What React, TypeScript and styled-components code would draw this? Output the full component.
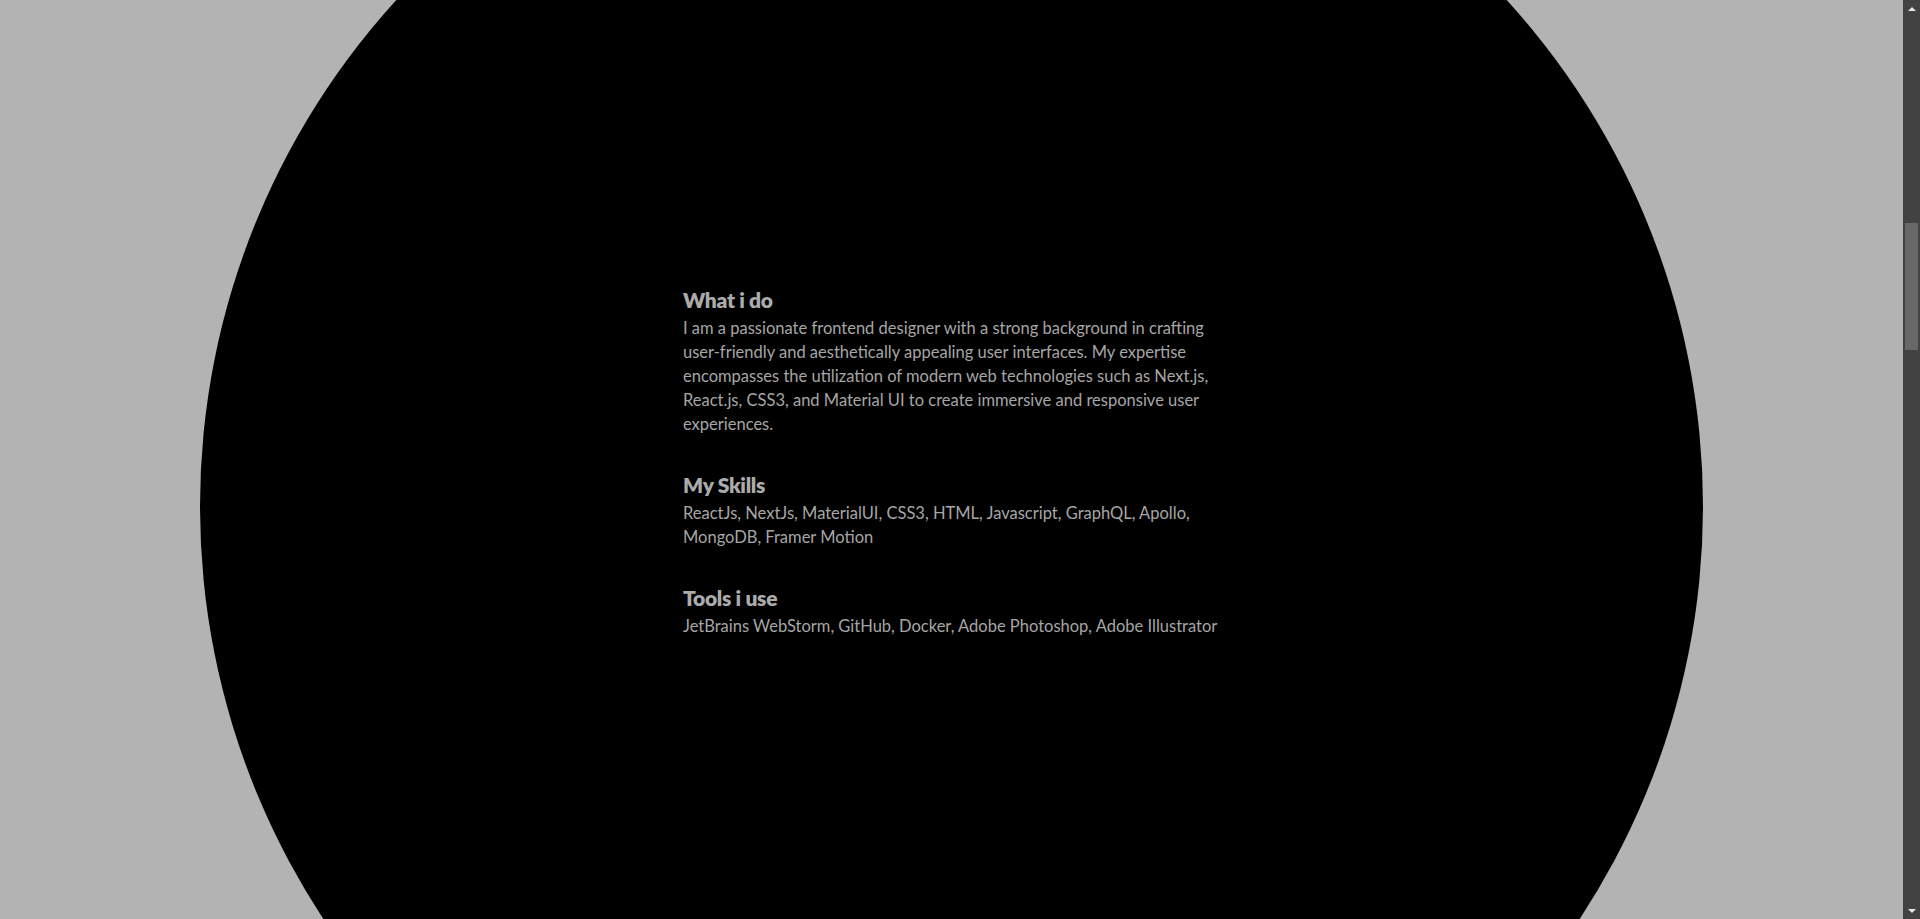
import React from 'react'
import styled, { createGlobalStyle } from 'styled-components'

const GlobalStyle = createGlobalStyle`
  body {
    margin: 0;
    overflow: hidden;
    background: #b3b3b3;
    font-family: Lato, "Noto Sans", sans-serif;
  }
`

const Page = styled.div`
  display: flex;
  height: 919px;
`

const Stage = styled.section`
  flex: 1;
  height: 919px;
  overflow: hidden;
  display: grid;
  grid-template-columns: 1fr;
  grid-template-rows: 919px;
  place-items: center;
`

const Circle = styled.div`
  grid-area: 1 / 1;
  width: 1503px;
  height: 1503px;
  margin-top: 93px;
  border-radius: 50%;
  background: #000;
`

const About = styled.div`
  grid-area: 1 / 1;
  width: 537px;
  padding-top: 5px;
  display: flex;
  flex-direction: column;
  gap: 35px;
`

const Block = styled.div`
  display: flex;
  flex-direction: column;
  gap: 2px;
`

const Heading = styled.h2`
  margin: 0;
  font-size: 21px;
  line-height: 28px;
  font-weight: 800;
  letter-spacing: -0.3px;
  color: #ababab;
`

const Text = styled.p`
  margin: 0;
  font-size: 16.5px;
  line-height: 24px;
  color: #a6a6a6;
`

const Scrollbar = styled.div`
  width: 17px;
  height: 919px;
  background: #424242;
  display: flex;
  flex-direction: column;
  align-items: center;
`

const Arrow = styled.div<{ $down?: boolean }>`
  height: 17px;
  display: flex;
  align-items: center;
  justify-content: center;
  &::after {
    content: '';
    border-left: 4px solid transparent;
    border-right: 4px solid transparent;
    ${(p) =>
      p.$down ? 'border-top: 4px solid #e6e6e6;' : 'border-bottom: 4px solid #e6e6e6;'}
  }
`

const Rail = styled.div`
  flex: 1;
  width: 100%;
  padding-top: 206px;
  box-sizing: border-box;
  display: flex;
  justify-content: center;
`

const Thumb = styled.div`
  width: 13px;
  height: 127px;
  background: #686868;
`

const sections = [
  {
    title: 'What i do',
    text: 'I am a passionate frontend designer with a strong background in crafting user-friendly and aesthetically appealing user interfaces. My expertise encompasses the utilization of modern web technologies such as Next.js, React.js, CSS3, and Material UI to create immersive and responsive user experiences.',
  },
  {
    title: 'My Skills',
    text: 'ReactJs, NextJs, MaterialUI, CSS3, HTML, Javascript, GraphQL, Apollo, MongoDB, Framer Motion',
  },
  {
    title: 'Tools i use',
    text: 'JetBrains WebStorm, GitHub, Docker, Adobe Photoshop, Adobe Illustrator',
  },
]

export default function App() {
  return (
    <>
      <GlobalStyle />
      <Page>
        <Stage>
          <Circle />
          <About>
            {sections.map((s) => (
              <Block key={s.title}>
                <Heading>{s.title}</Heading>
                <Text>{s.text}</Text>
              </Block>
            ))}
          </About>
        </Stage>
        <Scrollbar>
          <Arrow />
          <Rail>
            <Thumb />
          </Rail>
          <Arrow $down />
        </Scrollbar>
      </Page>
    </>
  )
}
